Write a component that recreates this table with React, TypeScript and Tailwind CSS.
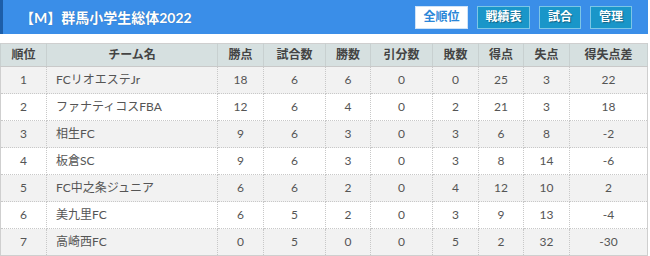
const teams = [
  { rank: 1, name: "FCリオエステJr", pts: 18, games: 6, win: 6, draw: 0, lose: 0, gf: 25, ga: 3, diff: 22 },
  { rank: 2, name: "ファナティコスFBA", pts: 12, games: 6, win: 4, draw: 0, lose: 2, gf: 21, ga: 3, diff: 18 },
  { rank: 3, name: "相生FC", pts: 9, games: 6, win: 3, draw: 0, lose: 3, gf: 6, ga: 8, diff: -2 },
  { rank: 4, name: "板倉SC", pts: 9, games: 6, win: 3, draw: 0, lose: 3, gf: 8, ga: 14, diff: -6 },
  { rank: 5, name: "FC中之条ジュニア", pts: 6, games: 6, win: 2, draw: 0, lose: 4, gf: 12, ga: 10, diff: 2 },
  { rank: 6, name: "美九里FC", pts: 6, games: 5, win: 2, draw: 0, lose: 3, gf: 9, ga: 13, diff: -4 },
  { rank: 7, name: "高崎西FC", pts: 0, games: 5, win: 0, draw: 0, lose: 5, gf: 2, ga: 32, diff: -30 },
];

const cols = [
  { label: "順位", w: "w-[46px]" },
  { label: "チーム名", w: "w-[171px]" },
  { label: "勝点", w: "w-[46px]" },
  { label: "試合数", w: "w-[62px]" },
  { label: "勝数", w: "w-[45px]" },
  { label: "引分数", w: "w-[62px]" },
  { label: "敗数", w: "w-[46px]" },
  { label: "得点", w: "w-[45px]" },
  { label: "失点", w: "w-[46px]" },
  { label: "得失点差", w: "" },
];

const font = "font-['Lato','Noto_Sans_CJK_JP',sans-serif]";

export default function App() {
  return (
    <div className={`w-[648px] bg-white ${font}`}>
      <div className="flex h-[34px] items-center justify-between border-l-[3px] border-[#1d5ea8] bg-[#3a8ee8] pl-[17px] pr-[16px]">
        <h1 className="text-[14px] font-bold text-white [text-shadow:0_0_1px_rgba(0,0,0,0.3)]">【M】群馬小学生総体2022</h1>
        <div className="flex gap-[9px]">
          <button className="h-[23px] w-[53px] border border-[#cfe3f7] bg-white text-[12px] font-bold text-[#2a86d8]">全順位</button>
          <button className="h-[23px] w-[53px] border border-[#7cc6e6] bg-[#1996c9] text-[12px] font-bold text-white [text-shadow:1px_1px_1px_rgba(0,0,0,0.35)]">戦績表</button>
          <button className="h-[23px] w-[42px] border border-[#7cc6e6] bg-[#1996c9] text-[12px] font-bold text-white [text-shadow:1px_1px_1px_rgba(0,0,0,0.35)]">試合</button>
          <button className="h-[23px] w-[42px] border border-[#7cc6e6] bg-[#1996c9] text-[12px] font-bold text-white [text-shadow:1px_1px_1px_rgba(0,0,0,0.35)]">管理</button>
        </div>
      </div>
      <table className="mt-[9px] w-full table-fixed border-collapse border border-[#cfcfcf] text-[12px] text-[#555]">
        <thead>
          <tr className="h-[23px] bg-[#d6e0e0]">
            {cols.map((c) => (
              <th key={c.label} className={`${c.w} border-x border-b border-x-[#c8d0d0] border-b-[#c9c9c9] font-bold text-[#444]`}>
                {c.label}
              </th>
            ))}
          </tr>
        </thead>
        <tbody>
          {teams.map((t) => (
            <tr key={t.rank} className="h-[27px] odd:bg-[#f2f2f2] even:bg-white">
              <td className="border border-dotted border-[#c8c8c8] text-center">{t.rank}</td>
              <td className="border border-dotted border-[#c8c8c8] pl-[9px] text-left">{t.name}</td>
              {[t.pts, t.games, t.win, t.draw, t.lose, t.gf, t.ga, t.diff].map((v, i) => (
                <td key={i} className="border border-dotted border-[#c8c8c8] text-center">{v}</td>
              ))}
            </tr>
          ))}
        </tbody>
      </table>
    </div>
  );
}
